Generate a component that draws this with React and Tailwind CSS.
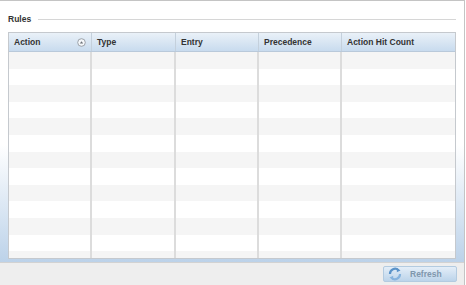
import React from "react";

const cols = [
  { label: "Action", w: "w-[83px]", sort: true },
  { label: "Type", w: "w-[84px]" },
  { label: "Entry", w: "w-[83px]" },
  { label: "Precedence", w: "w-[83px]" },
  { label: "Action Hit Count", w: "flex-1" },
];

function SortIcon() {
  return (
    <svg width="9" height="9" viewBox="0 0 9 9" className="shrink-0">
      <circle cx="4.5" cy="4.5" r="3.8" fill="#f4f7fa" stroke="#8a8f96" strokeWidth="0.8" />
      <path d="M2.8 5.6 L4.5 3.2 L6.2 5.6 Z" fill="#6b7077" />
    </svg>
  );
}

function RefreshIcon() {
  return (
    <svg width="14" height="14" viewBox="0 0 14 14">
      <path d="M2 7 A5 5 0 0 1 10.5 3.2" fill="none" stroke="#5b93c9" strokeWidth="2.2" />
      <path d="M9 1 L12.5 3.5 L8.8 5.2 Z" fill="#5b93c9" />
      <path d="M12 7 A5 5 0 0 1 3.5 10.8" fill="none" stroke="#86b3de" strokeWidth="2.2" />
      <path d="M5 13 L1.5 10.5 L5.2 8.8 Z" fill="#86b3de" />
    </svg>
  );
}

export default function App() {
  const rows = Array.from({ length: 13 });
  return (
    <div
      className="w-[465px] h-[285px] border-t border-r border-[#c4c4c4] flex flex-col overflow-hidden bg-white"
      style={{ fontFamily: '"Liberation Sans", Arial, sans-serif' }}
    >
      <div className="flex-1 min-h-0 flex flex-col bg-gradient-to-b from-white from-55% to-[#bcd2e9] px-[8px] pb-[3px]">
        <div className="flex items-center h-[31px] shrink-0 pt-[6px]">
          <span className="text-[8.5px] font-bold text-[#333]">Rules</span>
          <div className="flex-1 h-px bg-[#d6d6d6] ml-[7px]" />
        </div>
        <div className="flex-1 min-h-0 flex flex-col border border-[#c5c9ce] bg-white overflow-hidden">
          <div className="flex h-[19px] shrink-0 bg-gradient-to-b from-[#eaf1f8] to-[#c8dbee] border-b border-[#b9c9da]">
            {cols.map((c, i) => (
              <div
                key={i}
                className={`${c.w} flex items-center justify-between px-[5px] ${i < cols.length - 1 ? "border-r border-[#c4d0dc]" : ""}`}
              >
                <span className="text-[8.5px] font-bold text-[#333] whitespace-nowrap">{c.label}</span>
                {c.sort && <SortIcon />}
              </div>
            ))}
          </div>
          <div className="flex-1 min-h-0 flex flex-col overflow-hidden">
            {rows.map((_, r) => (
              <div key={r} className={`flex shrink-0 h-[16.6px] ${r % 2 === 0 ? "bg-[#f5f5f5]" : "bg-white"}`}>
                {cols.map((c, i) => (
                  <div
                    key={i}
                    className={`${c.w} ${i < cols.length - 1 ? "border-r-2 border-[#dcdcdc]" : ""}`}
                  />
                ))}
              </div>
            ))}
          </div>
        </div>
      </div>
      <div className="h-[23px] shrink-0 bg-[#eeeeee] border-t border-[#d2d2d2] flex items-center justify-end pr-[7px]">
        <div className="w-[74px] h-[16px] rounded-[2px] border border-[#b3cbe0] bg-gradient-to-b from-[#e4eef8] to-[#bcd4ea] flex items-center pl-[4px]">
          <RefreshIcon />
          <span className="ml-[8px] text-[8.5px] font-bold text-[#7f97ad]">Refresh</span>
        </div>
      </div>
    </div>
  );
}
